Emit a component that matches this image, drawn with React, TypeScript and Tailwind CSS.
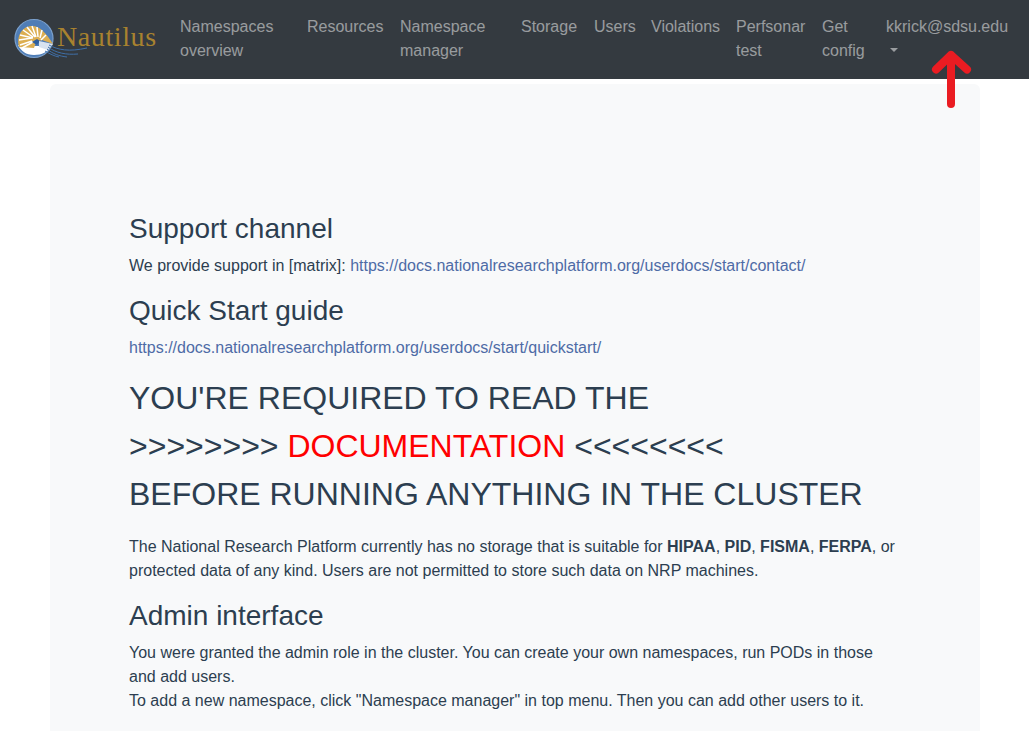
const navItems = [
  { label: 'Namespaces overview', width: 'w-[127px]' },
  { label: 'Resources', width: 'w-[93px]' },
  { label: 'Namespace manager', width: 'w-[121px]' },
  { label: 'Storage', width: 'w-[73px]' },
  { label: 'Users', width: 'w-[57px]' },
  { label: 'Violations', width: 'w-[85px]' },
  { label: 'Perfsonar test', width: 'w-[86px]' },
  { label: 'Get config', width: 'w-[64px]' },
]

function NautilusMark() {
  return (
    <svg width="76" height="44" viewBox="0 0 76 44" className="shrink-0">
      <circle cx="20" cy="20.500" r="19" fill="#4f7db6" stroke="#7ba0cc" strokeWidth="1.200" />
      <path d="M4 27c5 1 10 1 15 1l18 0c-3 6-9 9-17 9-8 0-13-4-16-10z" fill="#ffffff" />
      <path d="M5 29C2 17 9 8 18 8c8 0 14 7 21 18l-11-4-6 2-2 6z" fill="#dcae52" />
      <path d="M6 27 18 23M5 22l13-2M6 17l13 3M9 12l10 7M13 9l8 10M18 8l4 11M23 9l1 10M28 12l-2 8M32 17l-5 5M8 30l11-6" stroke="#ffffff" strokeWidth="1.500" fill="none" />
      <path d="M18 24l5-3 3 2-3 4z" fill="#2f5f9e" />
      <path d="M25 23l14 3-5 6-9-3z" fill="#d8e3f0" />
      <path d="M35 27c9 5 20 7 38 3M34 29c8 6 18 8 30 7M33 31c6 5 12 7 20 8M31 33c5 3 9 5 14 6" stroke="#3f6fa8" strokeWidth="1" fill="none" />
    </svg>
  )
}

function Logo() {
  return (
    <a className="flex items-center w-[158px] pl-[14px] shrink-0">
      <NautilusMark />
      <span className="relative ml-[-33px] mb-[6px] font-['Liberation_Serif',serif] text-[28px] leading-none tracking-[0.6px] text-[#a8822f]">
        Nautilus
      </span>
    </a>
  )
}

export default function App() {
  return (
    <div className="relative h-screen overflow-hidden bg-white font-['Liberation_Sans',Arial,sans-serif] text-base leading-6 text-[#2c3e50]">
      <nav className="flex h-[79px] items-center bg-[#343a40] pr-2">
        <Logo />
        <ul className="ml-[14px] mt-[7px] flex self-start">
          {navItems.map((item) => (
            <li key={item.label} className={`${item.width} px-2 py-2 text-[#ffffff80]`}>
              {item.label}
            </li>
          ))}
          <li className="w-[140px] px-2 py-2 text-[#ffffff80]">
            kkrick@sdsu.edu
            <span className="mt-[9px] ml-[4px] block h-0 w-0 border-x-4 border-t-4 border-x-transparent border-t-[#ffffff80]" />
          </li>
        </ul>
      </nav>

      <main className="ml-[50px] mt-[5px] w-[930px] rounded-md bg-[#f8f9fa] px-[79px] pt-[128px] pb-16">
        <h3 className="mb-2 text-[28px] leading-[1.2] font-medium">Support channel</h3>
        <p className="mb-4">
          We provide support in [matrix]:{' '}
          <a className="text-[#4e6ba6]">https://docs.nationalresearchplatform.org/userdocs/start/contact/</a>
        </p>
        <h3 className="mb-[9px] text-[28px] leading-[1.2] font-medium">Quick Start guide</h3>
        <p className="mb-[14px]">
          <a className="text-[#4e6ba6]">https://docs.nationalresearchplatform.org/userdocs/start/quickstart/</a>
        </p>
        <h2 className="mb-[17px] text-[32px] leading-[48px] font-medium">
          YOU'RE REQUIRED TO READ THE
          <br />
          &gt;&gt;&gt;&gt;&gt;&gt;&gt;&gt; <a className="text-[#ff0000]">DOCUMENTATION</a> &lt;&lt;&lt;&lt;&lt;&lt;&lt;&lt;
          <br />
          BEFORE RUNNING ANYTHING IN THE CLUSTER
        </h2>
        <p className="mb-4">
          The National Research Platform currently has no storage that is suitable for <b>HIPAA</b>, <b>PID</b>,{' '}
          <b>FISMA</b>, <b>FERPA</b>, or protected data of any kind. Users are not permitted to store such data on NRP
          machines.
        </p>
        <h3 className="mb-2 text-[28px] leading-[1.2] font-medium">Admin interface</h3>
        <p className="mb-4">
          You were granted the admin role in the cluster. You can create your own namespaces, run PODs in those and add
          users.
          <br />
          To add a new namespace, click "Namespace manager" in top menu. Then you can add other users to it.
        </p>
      </main>

      {/* red annotation arrow over the user menu */}
      <svg width="50" height="64" viewBox="0 0 50 64" className="absolute left-[926px] top-[48px]">
        <path d="M25 56V7M10 21.500 25 7 41 21.500" stroke="#ea1c22" strokeWidth="8" strokeLinecap="round" strokeLinejoin="round" fill="none" />
      </svg>
    </div>
  )
}
